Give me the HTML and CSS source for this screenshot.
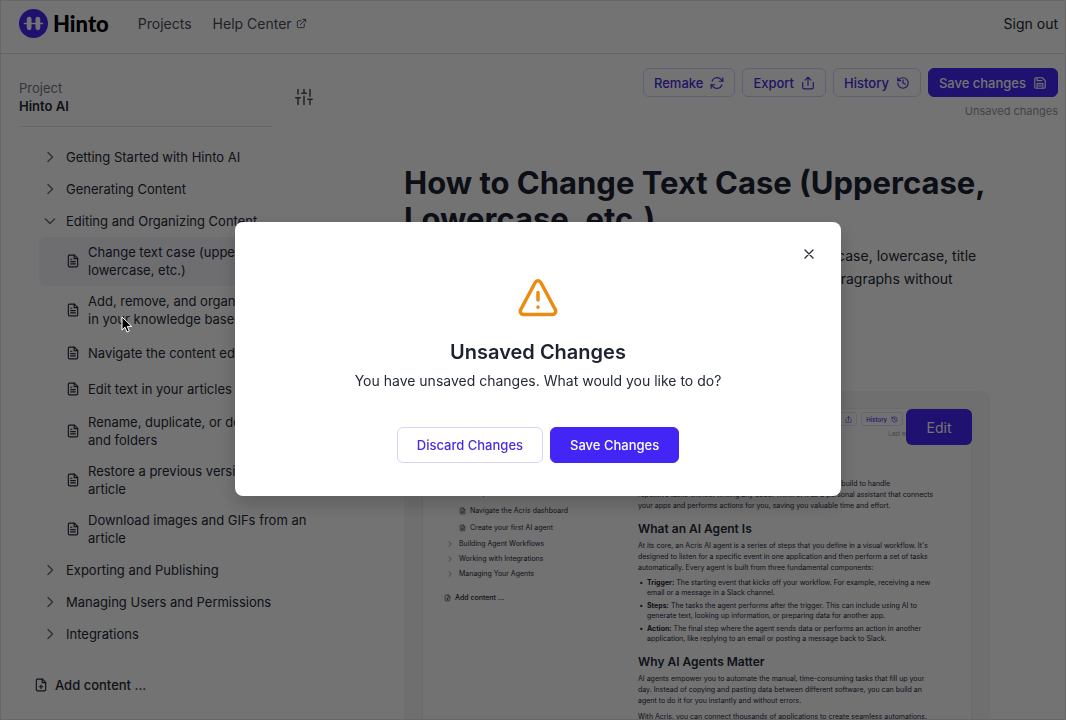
FILE: index.html
```html
<!DOCTYPE html>
<html lang="en">
<head>
    <meta charset="UTF-8">
    <meta name="viewport" content="width=device-width, initial-scale=1.0">
    <title>Hinto - Editor</title>
    <link rel="stylesheet" href="styles.css">
</head>
<body>
    <!-- shared icons -->
    <svg class="sprite" aria-hidden="true">
        <symbol id="i-right" viewBox="0 0 24 24"><path d="M8 3l9 9-9 9"/></symbol>
        <symbol id="i-down" viewBox="0 0 24 24"><path d="M3 8l9 9 9-9"/></symbol>
        <symbol id="i-file" viewBox="0 0 24 24"><path d="M14.5 2H6a2 2 0 0 0-2 2v16a2 2 0 0 0 2 2h12a2 2 0 0 0 2-2V7.500z"/><path d="M14 2v6h6M8 9h2M8 13h8M8 17h8"/></symbol>
        <symbol id="i-file-plus" viewBox="0 0 24 24"><path d="M14.500 2H6a2 2 0 0 0-2 2v16a2 2 0 0 0 2 2h12a2 2 0 0 0 2-2V7.500z"/><path d="M14 2v6h6M9 15h6M12 12v6"/></symbol>
        <symbol id="i-share" viewBox="0 0 24 24"><path d="M3 11v9a2 2 0 0 0 2 2h14a2 2 0 0 0 2-2v-9M12 16V2M7 7l5-5 5 5"/></symbol>
        <symbol id="i-history" viewBox="0 0 24 24"><path d="M3 12a9 9 0 1 0 9-9 9.750 9.750 0 0 0-6.740 2.740L3 8"/><path d="M3 3v5h5M12 7v5l4 2"/></symbol>
    </svg>

    <div class="app">
        <header class="topbar">
            <a class="logo" href="#">
                <svg class="logo-mark" viewBox="0 0 28 28" aria-hidden="true">
                    <circle cx="14" cy="14" r="14" fill="#4726f5"/>
                    <g fill="#fff">
                        <rect x="7.500" y="7.500" width="4.600" height="13" rx="2.300"/>
                        <rect x="15.900" y="7.500" width="4.600" height="13" rx="2.300"/>
                        <rect x="4.500" y="13.200" width="19" height="1.600" rx="0.800"/>
                    </g>
                </svg>
                <span class="logo-text">Hinto</span>
            </a>
            <nav class="topnav">
                <a href="#">Projects</a>
                <a href="#">Help Center
                    <svg class="icon ext" viewBox="0 0 24 24"><path d="M18 13v6a2 2 0 0 1-2 2H5a2 2 0 0 1-2-2V8a2 2 0 0 1 2-2h6M15 3h6v6M9.500 14.500L21 3"/></svg>
                </a>
            </nav>
            <a class="signout" href="#">Sign out</a>
        </header>

        <div class="layout">
            <aside class="sidebar">
                <div class="project">
                    <div>
                        <div class="project-label">Project</div>
                        <div class="project-name">Hinto AI</div>
                    </div>
                    <button class="icon-btn" type="button" aria-label="Project settings">
                        <svg class="icon sliders" viewBox="0 0 24 24"><path d="M4 22v-9M4 8V2M12 22V11M12 7V2M20 22v-7M20 11V2M1 13h6M9 7h6M17 15h6"/></svg>
                    </button>
                </div>

                <nav class="tree">
                    <button class="folder" type="button"><svg class="icon chev"><use href="#i-right"/></svg>Getting Started with Hinto AI</button>
                    <button class="folder" type="button"><svg class="icon chev"><use href="#i-right"/></svg>Generating Content</button>
                    <button class="folder" type="button"><svg class="icon chev"><use href="#i-down"/></svg>Editing and Organizing Content</button>
                    <a class="article-link active" href="#"><svg class="icon file"><use href="#i-file"/></svg><span>Change text case (uppercase, lowercase, etc.)</span></a>
                    <a class="article-link" href="#"><svg class="icon file"><use href="#i-file"/></svg><span>Add, remove, and organize files<br>in your knowledge base</span></a>
                    <a class="article-link" href="#"><svg class="icon file"><use href="#i-file"/></svg><span>Navigate the content editor</span></a>
                    <a class="article-link" href="#"><svg class="icon file"><use href="#i-file"/></svg><span>Edit text in your articles</span></a>
                    <a class="article-link" href="#"><svg class="icon file"><use href="#i-file"/></svg><span>Rename, duplicate, or delete files and folders</span></a>
                    <a class="article-link" href="#"><svg class="icon file"><use href="#i-file"/></svg><span>Restore a previous version of an article</span></a>
                    <a class="article-link" href="#"><svg class="icon file"><use href="#i-file"/></svg><span>Download images and GIFs from an article</span></a>
                    <button class="folder" type="button"><svg class="icon chev"><use href="#i-right"/></svg>Exporting and Publishing</button>
                    <button class="folder" type="button"><svg class="icon chev"><use href="#i-right"/></svg>Managing Users and Permissions</button>
                    <button class="folder" type="button"><svg class="icon chev"><use href="#i-right"/></svg>Integrations</button>
                </nav>
                <button class="add-content" type="button"><svg class="icon file"><use href="#i-file-plus"/></svg>Add content ...</button>
            </aside>

            <main class="main">
                <div class="toolbar">
                    <button class="btn btn-outline" type="button">Remake
                        <svg class="icon tool" viewBox="0 0 24 24"><path d="M22 3v6h-6M2 21v-6h6"/><path d="M3.500 9a9 9 0 0 1 15-3.500L22 9M2 15l3.500 3.500a9 9 0 0 0 15-3.500"/></svg>
                    </button>
                    <button class="btn btn-outline" type="button">Export <svg class="icon tool"><use href="#i-share"/></svg></button>
                    <button class="btn btn-outline" type="button">History <svg class="icon tool"><use href="#i-history"/></svg></button>
                    <button class="btn btn-primary" type="button">Save changes
                        <svg class="icon tool" viewBox="0 0 24 24"><path d="M3 5a2 2 0 0 1 2-2h11l5 5v11a2 2 0 0 1-2 2H5a2 2 0 0 1-2-2zM7 21v-8h10v8M7 3v5h8M10 17h4"/></svg>
                    </button>
                </div>
                <div class="status">Unsaved changes</div>

                <article class="article">
                    <h1>How to Change Text Case (Uppercase, Lowercase, etc.)</h1>
                    <p>You can quickly change the case of your selected words to uppercase, lowercase, title<br>case, or sentence case. This will help you format headings and paragraphs without<br>retyping them.</p>

                    <figure class="shot">
                        <button class="edit-btn" type="button">Edit</button>
                        <div class="shot-page">
                            <div class="mini-side">
                                <div class="mini-item tall"><svg class="icon"><use href="#i-file"/></svg>Start from a<br>template</div>
                                <div class="mini-item"><svg class="icon"><use href="#i-file"/></svg>Navigate the Acris dashboard</div>
                                <div class="mini-item"><svg class="icon"><use href="#i-file"/></svg>Create your first AI agent</div>
                                <div class="mini-folder"><svg class="icon"><use href="#i-right"/></svg>Building Agent Workflows</div>
                                <div class="mini-folder"><svg class="icon"><use href="#i-right"/></svg>Working with Integrations</div>
                                <div class="mini-folder"><svg class="icon"><use href="#i-right"/></svg>Managing Your Agents</div>
                                <div class="mini-add"><svg class="icon"><use href="#i-file-plus"/></svg>Add content ...</div>
                            </div>
                            <div class="mini-main">
                                <div class="mini-tools">
                                    <span class="mini-btn">Export <svg class="icon"><use href="#i-share"/></svg></span>
                                    <span class="mini-btn">History <svg class="icon"><use href="#i-history"/></svg></span>
                                </div>
                                <div class="mini-status">Last edited just now</div>
                                <div class="mini-body">
                                    <p>An Acris AI agent is an automated digital worker that you can build to handle<br>repetitive tasks without writing any code. Think of it as a personal assistant that connects<br>your apps and performs actions for you, saving you valuable time and effort.</p>
                                    <h2>What an AI Agent Is</h2>
                                    <p>At its core, an Acris AI agent is a series of steps that you define in a visual workflow. It's<br>designed to listen for a specific event in one application and then perform a set of tasks<br>automatically. Every agent is built from three fundamental components:</p>
                                    <ul>
                                        <li><b>Trigger:</b> The starting event that kicks off your workflow. For example, receiving a new<br>email or a message in a Slack channel.</li>
                                        <li><b>Steps:</b> The tasks the agent performs after the trigger. This can include using AI to<br>generate text, looking up information, or preparing data for another app.</li>
                                        <li><b>Action:</b> The final step where the agent sends data or performs an action in another<br>application, like replying to an email or posting a message back to Slack.</li>
                                    </ul>
                                    <h2>Why AI Agents Matter</h2>
                                    <p>AI agents empower you to automate the manual, time-consuming tasks that fill up your<br>day. Instead of copying and pasting data between different software, you can build an<br>agent to do it for you instantly and without errors.</p>
                                    <p>With Acris, you can connect thousands of applications to create seamless automations.</p>
                                </div>
                            </div>
                        </div>
                    </figure>
                </article>
            </main>
        </div>
    </div>

    <div class="overlay">
        <div class="modal" role="dialog" aria-modal="true" aria-labelledby="modal-title">
            <button class="close" type="button" aria-label="Close">
                <svg class="icon" viewBox="0 0 10 10"><path d="M1 1l8 8M9 1l-8 8"/></svg>
            </button>
            <svg class="warn" viewBox="0 0 40 38" aria-hidden="true">
                <path d="M17.200 3.500L2.500 31a3.300 3.300 0 0 0 2.900 4.500h29.200a3.300 3.300 0 0 0 2.900-4.500L22.800 3.500a3.200 3.200 0 0 0-5.600 0zM20 13.500v7.500M20 28v.2"/>
            </svg>
            <h2 id="modal-title">Unsaved Changes</h2>
            <p>You have unsaved changes. What would you like to do?</p>
            <div class="modal-actions">
                <button class="btn btn-outline" type="button">Discard Changes</button>
                <button class="btn btn-primary" type="button">Save Changes</button>
            </div>
        </div>
    </div>

    <svg class="cursor" viewBox="0 0 12 18" aria-hidden="true"><path d="M1 1v13l3-2.800 2 4.800 2.300-1-2-4.600h4.400z" fill="#000" stroke="#fff" stroke-width="1"/></svg>
</body>
</html>
```
FILE: styles.css
```css
* {
    box-sizing: border-box;
}
body {
    margin: 0;
    font-family: Inter, "Liberation Sans", sans-serif;
    font-size: 13px;
    color: #252a37;
    background: #fff;
}
a {
    color: inherit;
    text-decoration: none;
}
button {
    font: inherit;
    color: inherit;
    background: none;
    border: 0;
    padding: 0;
    cursor: pointer;
}
.sprite {
    display: none;
}
.icon {
    fill: none;
    stroke: currentColor;
    stroke-width: 2;
    stroke-linecap: round;
    stroke-linejoin: round;
    flex: none;
}
.app {
    height: 100vh;
    overflow: hidden;
    display: flex;
    flex-direction: column;
    border: 1px solid #e4e4e8;
}

/* header */
.topbar {
    display: flex;
    align-items: center;
    flex: none;
    height: 53px;
    padding: 0 7px 7px 18px;
    border-bottom: 1px solid #dddde2;
    font-size: 14px;
}
.logo {
    display: flex;
    align-items: center;
    gap: 5px;
}
.logo-mark {
    width: 29px;
    height: 29px;
}
.logo-text {
    font-family: Lato, sans-serif;
    font-weight: 900;
    font-size: 22px;
    color: #000;
}
.topnav {
    display: flex;
    flex: 1;
    gap: 21px;
    margin-left: 29px;
    color: #4a4d5c;
}
.ext {
    width: 11px;
    height: 11px;
}

/* sidebar */
.layout {
    display: flex;
    flex: 1;
    min-height: 0;
}
.sidebar {
    flex: none;
    width: 312px;
    padding: 25px 0 0 18px;
}
.project {
    display: flex;
    justify-content: space-between;
    align-items: center;
    height: 48px;
    width: 294px;
    padding-bottom: 12px;
    position: relative;
}
.project::after {
    content: "";
    position: absolute;
    left: 0;
    right: 40px;
    bottom: 0;
    border-bottom: 1px solid #e4e4e8;
}
.project-label {
    line-height: 18px;
    color: #737685;
}
.project-name {
    line-height: 18px;
    font-weight: 600;
}
.sliders {
    display: block;
    width: 18px;
    height: 18px;
    color: #4a4d5c;
}
.tree {
    margin-top: 14px;
}
.folder {
    display: flex;
    align-items: center;
    gap: 10px;
    height: 32px;
    padding-left: 25px;
}
.chev {
    width: 12px;
    height: 12px;
    color: #6c6f7c;
    stroke-width: 3;
}
.article-link {
    display: flex;
    align-items: center;
    gap: 8px;
    min-height: 36px;
    margin-left: 20px;
    padding: 6px 0 7px 27px;
    line-height: 18px;
    border-radius: 6px;
}
.article-link.active {
    background: #f3f3fb;
}
.file {
    width: 14px;
    height: 16px;
}
.add-content {
    display: flex;
    align-items: center;
    gap: 7px;
    margin: 26px 0 0 15px;
    height: 18px;
    font-weight: 500;
}

/* editor */
.main {
    flex: 1;
    min-width: 0;
    padding: 14px 7px 0 0;
}
.toolbar {
    display: flex;
    justify-content: flex-end;
    gap: 7px;
}
.btn {
    display: flex;
    align-items: center;
    gap: 7px;
    height: 29px;
    padding: 0 10px;
    border: 1px solid #d9d3fa;
    border-radius: 6px;
    font-weight: 500;
}
.btn-outline {
    color: #4a2bdf;
}
.btn-primary {
    background: #4326f5;
    border-color: #4326f5;
    color: #fff;
}
.tool {
    width: 14px;
    height: 14px;
}
.status {
    margin-top: 6px;
    line-height: 16px;
    font-size: 11px;
    text-align: right;
    color: #9497a3;
}
.article {
    width: 586px;
    margin: 46px 0 0 91px;
}
.article h1 {
    margin: 0;
    font-size: 31px;
    line-height: 36px;
    font-weight: 700;
    color: #1c2230;
}
.article p {
    margin: 7px 0 0;
    font-size: 14px;
    line-height: 23px;
}

/* picture of the editor inside the article */
.shot {
    position: relative;
    margin: 78px 0 0;
    padding: 17px 18px 0;
    background: #f6f6f7;
    border-radius: 8px;
}
.edit-btn {
    position: absolute;
    top: 18px;
    right: 18px;
    width: 66px;
    height: 36px;
    border-radius: 6px;
    background: #4326f5;
    color: #fff;
    font-size: 14px;
}
.shot-page {
    display: flex;
    border: 1px solid #ededf0;
    background: #fdfdfe;
    font-size: 7px;
    line-height: 11px;
    height: 400px;
    overflow: hidden;
}
.mini-side {
    flex: none;
    width: 215px;
    padding-top: 65px;
}
.mini-side .icon {
    width: 7px;
    height: 8px;
}
.mini-item, .mini-folder, .mini-add {
    display: flex;
    align-items: center;
    gap: 4px;
}
.mini-item {
    height: 17px;
    padding-left: 36px;
}
.mini-item.tall {
    height: 28px;
}
.mini-folder {
    gap: 6px;
    height: 15px;
    padding-left: 24px;
}
.mini-side .mini-folder .icon {
    width: 6px;
    height: 6px;
}
.mini-add {
    margin-top: 11px;
    padding-left: 21px;
    font-weight: 500;
}
.mini-main {
    flex: 1;
    padding-top: 3px;
}
.mini-tools {
    display: flex;
    justify-content: flex-end;
    gap: 4px;
    margin-right: 68px;
}
.mini-btn {
    display: flex;
    align-items: center;
    gap: 4px;
    height: 14px;
    padding: 0 4px;
    border: 1px solid #e2def8;
    border-radius: 3px;
    font-weight: 500;
    font-size: 6px;
    color: #4a2bdf;
}
.mini-btn .icon {
    width: 7px;
    height: 7px;
}
.mini-status {
    margin: 2px 26px 0 0;
    text-align: right;
    font-size: 6px;
    color: #9497a3;
}
.mini-body {
    margin-top: 39px;
}
.mini-body p {
    margin: 0 0 5px;
    font-size: 7px;
    line-height: 11px;
    white-space: nowrap;
}
.mini-body h2 {
    margin: 10px 0 3px;
    font-size: 12px;
    line-height: 16px;
    font-weight: 600;
}
.mini-body ul {
    margin: 0;
    padding-left: 9px;
    list-style: "•  ";
    line-height: 10px;
    white-space: nowrap;
}
.mini-body li {
    margin-bottom: 3px;
}

/* dialog */
.overlay {
    position: fixed;
    inset: 0;
    display: flex;
    align-items: center;
    justify-content: center;
    padding: 0 0 2px 10px;
    background: rgba(0, 0, 0, 0.55);
}
.modal {
    position: relative;
    display: flex;
    flex-direction: column;
    align-items: center;
    width: 606px;
    max-width: 100%;
    padding: 57px 24px 33px;
    background: #fff;
    border-radius: 8px;
    box-shadow: 0 8px 20px rgba(0, 0, 0, 0.2);
}
.close {
    position: absolute;
    top: 22px;
    right: 22px;
    padding: 5px;
}
.close .icon {
    display: block;
    width: 10px;
    height: 10px;
    stroke-width: 1.3;
}
.warn {
    width: 40px;
    height: 38px;
    fill: none;
    stroke: #ea8c10;
    stroke-width: 3.5;
    stroke-linecap: round;
    stroke-linejoin: round;
}
.modal h2 {
    margin: 22px 0 0;
    font-size: 20px;
    line-height: 26px;
    font-weight: 600;
    color: #1c2230;
}
.modal p {
    margin: 6px 0 0;
    font-size: 14px;
    line-height: 20px;
}
.modal-actions {
    display: flex;
    gap: 7px;
    margin-top: 36px;
}
.modal-actions .btn {
    height: 36px;
    padding: 0 19px;
}
.cursor {
    position: fixed;
    left: 121px;
    top: 316px;
    width: 12px;
    height: 18px;
}
```
